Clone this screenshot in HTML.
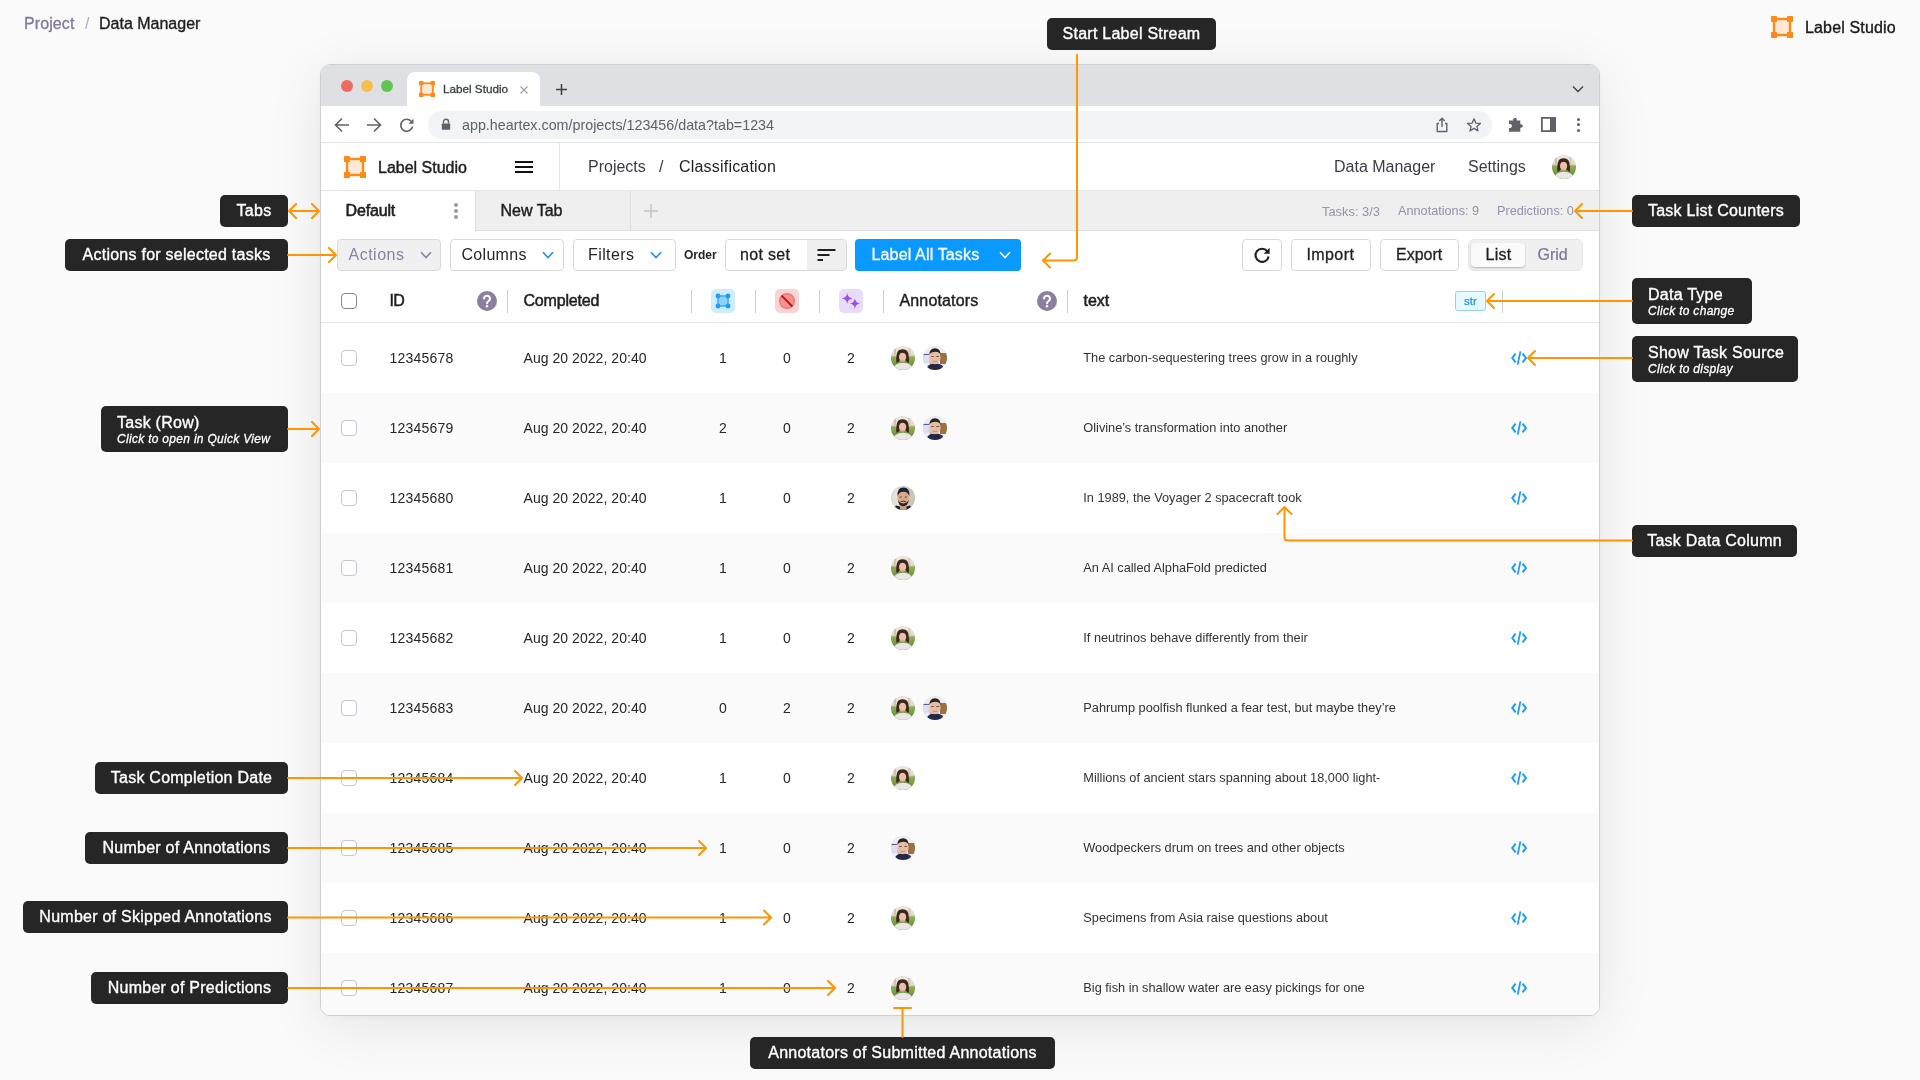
<!DOCTYPE html>
<html><head><meta charset="utf-8"><title>Label Studio Data Manager</title><style>
*{margin:0;padding:0;box-sizing:border-box}
html,body{width:1920px;height:1080px;overflow:hidden}
body{background:#fafafa;font-family:"Liberation Sans", sans-serif;position:relative;color:#262626;-webkit-font-smoothing:antialiased}
.lay{position:absolute;left:0;top:0;width:1920px;height:1080px;will-change:transform}
.a{position:absolute;white-space:nowrap}
.co{position:absolute;background:#262626;color:#fff;border-radius:5px;white-space:nowrap;font-size:16px;letter-spacing:0.25px;-webkit-text-stroke:0.36px #fff}
.co .t{position:absolute;left:16px;top:7px;line-height:18px}
.co .s{position:absolute;left:16px;font-size:12px;font-style:italic;letter-spacing:0.3px;-webkit-text-stroke:0.29px #fff}
.win{position:absolute;left:320px;top:64px;width:1280px;height:952px;border:1px solid #cfcfd2;border-radius:10px;overflow:hidden;background:#fff;box-shadow:0 10px 55px rgba(0,0,0,0.085),0 2px 8px rgba(0,0,0,0.03)}
.w{position:absolute}
.btn{position:absolute;top:175px;height:32px;border:1px solid #dcdcdc;border-radius:4px;background:#fff}
.row{position:absolute;left:0;width:1278px;height:70px}
.row .c{position:absolute;font-size:14px;color:#262626;top:27px;line-height:16px}
.cb{position:absolute;width:16px;height:16px;border:1px solid #c9c3d6;border-radius:4px;background:#fff}
.div{position:absolute;width:1px;height:23px;background:#cfcfcf}
</style></head>
<body><div class="lay">
<div class="a" style="left:24px;top:14.5px;font-size:16px;line-height:18px;color:#80789a;-webkit-text-stroke:0.29px #80789a;letter-spacing:0.1px">Project</div><div class="a" style="left:85px;top:14.5px;font-size:16px;line-height:18px;color:#b3adc0">/</div><div class="a" style="left:99px;top:14.5px;font-size:16px;line-height:18px;color:#1f1f1f;-webkit-text-stroke:0.36px #1f1f1f">Data Manager</div><svg style="position:absolute;left:1771px;top:16px" width="22" height="22" viewBox="0 0 22 22">
<rect x="3" y="3" width="16" height="16" fill="#fde8d6" stroke="#ff8a14" stroke-width="2.4"/>
<rect x="0" y="0" width="6" height="6" rx="0.6" fill="#ff8a14"/><rect x="16" y="0" width="6" height="6" rx="0.6" fill="#ff8a14"/>
<rect x="0" y="16" width="6" height="6" rx="0.6" fill="#ff8a14"/><rect x="16" y="16" width="6" height="6" rx="0.6" fill="#ff8a14"/>
</svg><div class="a" style="left:1805px;top:19px;font-size:16px;line-height:18px;color:#1a1a1a;letter-spacing:0.15px;-webkit-text-stroke:0.36px #1a1a1a">Label Studio</div>
<div class="win">
<div class="w" style="left:0;top:0;width:1278px;height:41px;background:#dfe0e4"></div><div class="w" style="left:20px;top:15px;width:12px;height:12px;border-radius:6px;background:#ed6a5e"></div><div class="w" style="left:40px;top:15px;width:12px;height:12px;border-radius:6px;background:#f5bf4f"></div><div class="w" style="left:60px;top:15px;width:12px;height:12px;border-radius:6px;background:#61c554"></div><div class="w" style="left:86px;top:7px;width:133px;height:34px;background:#fff;border-radius:8px 8px 0 0"></div><svg style="position:absolute;left:98px;top:16px" width="16" height="16" viewBox="0 0 22 22">
<rect x="3" y="3" width="16" height="16" fill="#fde8d6" stroke="#ff8a14" stroke-width="2.4"/>
<rect x="0" y="0" width="6" height="6" rx="0.6" fill="#ff8a14"/><rect x="16" y="0" width="6" height="6" rx="0.6" fill="#ff8a14"/>
<rect x="0" y="16" width="6" height="6" rx="0.6" fill="#ff8a14"/><rect x="16" y="16" width="6" height="6" rx="0.6" fill="#ff8a14"/>
</svg><div class="w a" style="left:122px;top:17px;font-size:11.7px;line-height:14px;color:#3c4043;-webkit-text-stroke:0.29px #3c4043">Label Studio</div><svg class="w" style="left:198px;top:20px" width="10" height="10"><path d="M1.5 1.5L8.5 8.5M8.5 1.5L1.5 8.5" stroke="#9aa0a6" stroke-width="1.2"/></svg><svg class="w" style="left:234px;top:18px" width="13" height="13"><path d="M6.5 1V12M1 6.5H12" stroke="#3c4043" stroke-width="1.5"/></svg><svg class="w" style="left:1251px;top:20px" width="12" height="8"><path d="M1 1.5L6 6.5L11 1.5" fill="none" stroke="#3c4043" stroke-width="1.4"/></svg><div class="w" style="left:0;top:41px;width:1278px;height:37px;background:#fff;border-bottom:1px solid #e3e3e3"></div><svg class="w" style="left:13px;top:52px" width="16" height="16"><path d="M15 8H2M8 1.5L1.5 8L8 14.5" fill="none" stroke="#5f6368" stroke-width="1.6"/></svg><svg class="w" style="left:45px;top:52px" width="16" height="16"><path d="M1 8H14M8 1.5L14.5 8L8 14.5" fill="none" stroke="#5f6368" stroke-width="1.6"/></svg><svg class="w" style="left:78px;top:52px" width="16" height="16"><path d="M12.2 4.2A6 6 0 1 0 13.6 9.5" fill="none" stroke="#5f6368" stroke-width="1.6"/><path d="M14.5 1.8V6.8H9.5Z" fill="#5f6368"/></svg><div class="w" style="left:107px;top:46px;width:1064px;height:28px;border-radius:14px;background:#f1f3f4"></div><svg class="w" style="left:120px;top:53px" width="10" height="12"><path d="M2.5 5.5V3.8A2.5 2.5 0 0 1 7.5 3.8V5.5" fill="none" stroke="#5f6368" stroke-width="1.4"/><rect x="0.8" y="5.5" width="8.4" height="6.3" rx="0.8" fill="#5f6368"/></svg><div class="w a" style="left:141px;top:52px;font-size:14.3px;line-height:17px;color:#5f6368">app.heartex.com/projects/123456/data?tab=1234</div><svg class="w" style="left:1114px;top:52px" width="14" height="16"><path d="M4 6.5H2.2V14.5H11.8V6.5H10" fill="none" stroke="#5f6368" stroke-width="1.4" stroke-linejoin="round"/><path d="M7 10V1.5M4.3 4L7 1.3L9.7 4" fill="none" stroke="#5f6368" stroke-width="1.4"/></svg><svg class="w" style="left:1145px;top:52px" width="16" height="16"><path d="M8 1.8L9.8 6.1L14.4 6.4L10.9 9.4L12 13.9L8 11.4L4 13.9L5.1 9.4L1.6 6.4L6.2 6.1Z" fill="none" stroke="#5f6368" stroke-width="1.3" stroke-linejoin="round"/></svg><svg class="w" style="left:1187px;top:52px" width="16" height="16"><path d="M6.2 1.2A1.6 1.6 0 0 1 8.8 2.6V3.6H12.3V7.2H13A1.8 1.8 0 0 1 13 10.8H12.3V14.8H1V10.9H2A1.9 1.9 0 0 0 2 7.1H1V3.6H5.1V2.6A1.6 1.6 0 0 1 6.2 1.2Z" fill="#5f6368"/></svg><svg class="w" style="left:1220px;top:52px" width="15" height="15"><rect x="0.9" y="0.9" width="13.2" height="13.2" fill="none" stroke="#5f6368" stroke-width="1.8"/><rect x="9" y="1" width="5" height="13" fill="#5f6368"/></svg><div class="w" style="left:1255.5px;top:52.5px;width:3.2px;height:3.2px;border-radius:2px;background:#5f6368"></div><div class="w" style="left:1255.5px;top:58.0px;width:3.2px;height:3.2px;border-radius:2px;background:#5f6368"></div><div class="w" style="left:1255.5px;top:63.5px;width:3.2px;height:3.2px;border-radius:2px;background:#5f6368"></div><div class="w" style="left:0;top:78px;width:1278px;height:48px;background:#fff;border-bottom:1px solid #e5e5e8"></div><svg style="position:absolute;left:23px;top:91px" width="22" height="22" viewBox="0 0 22 22">
<rect x="3" y="3" width="16" height="16" fill="#fde8d6" stroke="#ff8a14" stroke-width="2.4"/>
<rect x="0" y="0" width="6" height="6" rx="0.6" fill="#ff8a14"/><rect x="16" y="0" width="6" height="6" rx="0.6" fill="#ff8a14"/>
<rect x="0" y="16" width="6" height="6" rx="0.6" fill="#ff8a14"/><rect x="16" y="16" width="6" height="6" rx="0.6" fill="#ff8a14"/>
</svg><div class="w a" style="left:57px;top:94px;font-size:16px;line-height:18px;color:#1f1f1f;-webkit-text-stroke:0.43px #1f1f1f">Label Studio</div><div class="w" style="left:194px;top:96px;width:18px;height:2px;background:#111"></div><div class="w" style="left:194px;top:101px;width:18px;height:2px;background:#111"></div><div class="w" style="left:194px;top:106px;width:18px;height:2px;background:#111"></div><div class="w" style="left:238px;top:78px;width:1px;height:47px;background:#e5e5e8"></div><div class="w a" style="left:267px;top:93px;font-size:16px;line-height:18px;color:#3b3a4a">Projects</div><div class="w a" style="left:338px;top:93px;font-size:16px;line-height:18px;color:#3b3a4a">/</div><div class="w a" style="left:358px;top:93px;font-size:16px;line-height:18px;color:#1f1f1f;letter-spacing:0.2px">Classification</div><div class="w a" style="left:1013px;top:93px;font-size:16px;line-height:18px;color:#3b3a4a">Data Manager</div><div class="w a" style="left:1147px;top:93px;font-size:16px;line-height:18px;color:#3b3a4a">Settings</div><div class="w" style="left:0;top:126px;width:1278px;height:40px;background:#efefef;border-bottom:1px solid #dedde3"></div><div class="w" style="left:0;top:126px;width:154px;height:40px;background:#fff"></div><div class="w" style="left:154px;top:126px;width:156px;height:40px;border-left:1px solid #dedde3;border-right:1px solid #dedde3;border-bottom:1px solid #dedde3"></div><div class="w a" style="left:24.5px;top:137px;font-size:16px;line-height:18px;color:#1f1f1f;-webkit-text-stroke:0.58px #1f1f1f;letter-spacing:-0.15px">Default</div><div class="w" style="left:133px;top:138px;width:4px;height:4px;border-radius:2px;background:#9a9a9a"></div><div class="w" style="left:133px;top:144px;width:4px;height:4px;border-radius:2px;background:#9a9a9a"></div><div class="w" style="left:133px;top:150px;width:4px;height:4px;border-radius:2px;background:#9a9a9a"></div><div class="w a" style="left:179.5px;top:137px;font-size:16px;line-height:18px;color:#1f1f1f;-webkit-text-stroke:0.43px #1f1f1f">New Tab</div><svg class="w" style="left:323px;top:139px" width="14" height="14"><path d="M7 0V14M0 7H14" stroke="#c4c4c4" stroke-width="1.5"/></svg><div class="w a" style="left:1001px;top:139px;font-size:12.9px;line-height:15px;color:#9790aa">Tasks: 3/3</div><div class="w a" style="left:1077px;top:139px;font-size:12.7px;line-height:15px;color:#9790aa">Annotations: 9</div><div class="w a" style="left:1176px;top:139px;font-size:12.7px;line-height:15px;color:#9790aa">Predictions: 0</div><div class="w" style="left:16px;top:174px;width:104px;height:32px;background:#f0f0f0;border:1px solid #dadada;border-radius:4px"></div><div class="w a" style="left:27.5px;top:181px;font-size:16px;line-height:18px;color:#8b82a0;letter-spacing:0.5px">Actions</div><svg class="w" style="left:99px;top:186px" width="12" height="8"><path d="M1 1.2L6.0 6.5L11 1.2" fill="none" stroke="#8b82a0" stroke-width="1.6"/></svg><div class="w" style="left:128.5px;top:174px;width:114.5px;height:32px;background:#fff;border:1px solid #d9d9d9;border-radius:4px"></div><div class="w a" style="left:140.5px;top:181px;font-size:16px;line-height:18px;color:#262626;letter-spacing:0.3px">Columns</div><svg class="w" style="left:220.5px;top:186px" width="12" height="8"><path d="M1 1.2L6.0 6.5L11 1.2" fill="none" stroke="#1890ff" stroke-width="1.6"/></svg><div class="w" style="left:251.5px;top:174px;width:103.5px;height:32px;background:#fff;border:1px solid #d9d9d9;border-radius:4px"></div><div class="w a" style="left:267px;top:181px;font-size:16px;line-height:18px;color:#262626;letter-spacing:0.4px">Filters</div><svg class="w" style="left:328.5px;top:186px" width="12" height="8"><path d="M1 1.2L6.0 6.5L11 1.2" fill="none" stroke="#1890ff" stroke-width="1.6"/></svg><div class="w a" style="left:363px;top:183px;font-size:12px;line-height:14px;color:#262626;font-weight:bold">Order</div><div class="w" style="left:403.5px;top:174px;width:122.5px;height:32px;background:#fff;border:1px solid #d9d9d9;border-radius:4px"></div><div class="w" style="left:486px;top:175px;width:39px;height:30px;background:#efefef;border-radius:0 3px 3px 0"></div><div class="w a" style="left:419px;top:181px;font-size:16px;line-height:18px;color:#1f1f1f;letter-spacing:0.3px;-webkit-text-stroke:0.29px #1f1f1f">not set</div><svg class="w" style="left:496px;top:183px" width="20" height="14"><path d="M0.5 2H18.5M0.5 7H12.5M0.5 12H6" stroke="#1f1f1f" stroke-width="2"/></svg><div class="w" style="left:534px;top:174px;width:166px;height:32px;background:#0a99ff;border-radius:4px"></div><div class="w a" style="left:550.5px;top:181px;font-size:16px;line-height:18px;color:#fff;letter-spacing:0.15px;-webkit-text-stroke:0.29px #fff">Label All Tasks</div><svg class="w" style="left:677.5px;top:186px" width="12" height="8"><path d="M1 1.2L6.0 6.5L11 1.2" fill="none" stroke="#fff" stroke-width="1.6"/></svg><div class="w" style="left:921px;top:174px;width:40px;height:32px;background:#fff;border:1px solid #d9d9d9;border-radius:4px"></div><svg class="w" style="left:932px;top:181px" width="18" height="18"><path d="M14.3 5.2A6.6 6.6 0 1 0 15.6 10.5" fill="none" stroke="#1f1f1f" stroke-width="2.1"/><path d="M16.6 1.8V7.8H10.6Z" fill="#1f1f1f"/></svg><div class="w" style="left:969.5px;top:174px;width:80.5px;height:32px;background:#fff;border:1px solid #d9d9d9;border-radius:4px"></div><div class="w a" style="left:985.5px;top:181px;font-size:16px;line-height:18px;color:#1f1f1f;letter-spacing:0.4px;-webkit-text-stroke:0.29px #1f1f1f">Import</div><div class="w" style="left:1058.5px;top:174px;width:79.5px;height:32px;background:#fff;border:1px solid #d9d9d9;border-radius:4px"></div><div class="w a" style="left:1075px;top:181px;font-size:16px;line-height:18px;color:#1f1f1f;letter-spacing:0px;-webkit-text-stroke:0.29px #1f1f1f">Export</div><div class="w" style="left:1146.5px;top:174px;width:115.5px;height:32px;background:#f0f0f0;border:1px solid #e6e6e6;border-radius:6px"></div><div class="w" style="left:1150px;top:178px;width:54px;height:24px;background:#fafafa;border-radius:4px;box-shadow:0 1px 2px rgba(0,0,0,0.25)"></div><div class="w a" style="left:1164.5px;top:181px;font-size:16px;line-height:18px;color:#1f1f1f;letter-spacing:0.3px;-webkit-text-stroke:0.29px #1f1f1f">List</div><div class="w a" style="left:1216.5px;top:181px;font-size:16px;line-height:18px;color:#7f7599;-webkit-text-stroke:0.22px #7f7599">Grid</div><div class="w" style="left:0;top:257px;width:1278px;height:1px;background:#e6e6e6"></div><div class="cb" style="left:20px;top:228px;border-color:#8b82a0;border-width:1.3px"></div><div class="w a" style="left:68.5px;top:227px;font-size:16px;line-height:18px;color:#1f1f1f;letter-spacing:-0.6px;-webkit-text-stroke:0.51px #1f1f1f">ID</div><svg class="w" style="left:156px;top:226px" width="20" height="20"><circle cx="10" cy="10" r="10" fill="#8a7f9e"/><path d="M7.1 7.6A2.9 2.9 0 1 1 11.2 10.3C10.3 10.8 10 11.3 10 12.2" fill="none" stroke="#fff" stroke-width="2" stroke-linecap="round"/><circle cx="10" cy="15.3" r="1.25" fill="#fff"/></svg><div class="div" style="left:186px;top:224.5px"></div><div class="w a" style="left:202.5px;top:227px;font-size:16px;line-height:18px;color:#1f1f1f;letter-spacing:-0.2px;-webkit-text-stroke:0.51px #1f1f1f">Completed</div><div class="div" style="left:370px;top:224.5px"></div><svg class="w" style="left:390px;top:224px" width="24" height="24"><rect width="24" height="24" rx="5" fill="#d0ecff"/><rect x="7" y="7" width="10" height="10" fill="#8ed1ff" stroke="#4db3ff" stroke-width="1.8"/><circle cx="7" cy="7" r="2.45" fill="#1a9bff"/><circle cx="17" cy="7" r="2.45" fill="#1a9bff"/><circle cx="7" cy="17" r="2.45" fill="#1a9bff"/><circle cx="17" cy="17" r="2.45" fill="#1a9bff"/></svg><div class="div" style="left:434px;top:224.5px"></div><svg class="w" style="left:454px;top:224px" width="24" height="24"><rect width="24" height="24" rx="5" fill="#fad4d4"/><circle cx="12" cy="12" r="7.3" fill="#f09494" stroke="#ec7474" stroke-width="1.4"/><path d="M6.6 6.6L17.2 17.2" stroke="#d90a0a" stroke-width="2"/></svg><div class="div" style="left:498px;top:224.5px"></div><svg class="w" style="left:518px;top:224px" width="24" height="24"><rect width="24" height="24" rx="5" fill="#e8dcfa"/><path d="M8.2 4.1Q8.739999999999998 8.96 13.6 9.5Q8.739999999999998 10.04 8.2 14.9Q7.659999999999999 10.04 2.799999999999999 9.5Q7.659999999999999 8.96 8.2 4.1Z" fill="#9b4ff2"/><path d="M15.9 9.3Q16.43 14.07 21.2 14.6Q16.43 15.129999999999999 15.9 19.9Q15.370000000000001 15.129999999999999 10.600000000000001 14.6Q15.370000000000001 14.07 15.9 9.3Z" fill="#9b4ff2"/></svg><div class="div" style="left:562px;top:224.5px"></div><div class="w a" style="left:578.5px;top:227px;font-size:16px;line-height:18px;color:#1f1f1f;letter-spacing:0.15px;-webkit-text-stroke:0.43px #1f1f1f">Annotators</div><svg class="w" style="left:716px;top:226px" width="20" height="20"><circle cx="10" cy="10" r="10" fill="#8a7f9e"/><path d="M7.1 7.6A2.9 2.9 0 1 1 11.2 10.3C10.3 10.8 10 11.3 10 12.2" fill="none" stroke="#fff" stroke-width="2" stroke-linecap="round"/><circle cx="10" cy="15.3" r="1.25" fill="#fff"/></svg><div class="div" style="left:746px;top:224.5px"></div><div class="w a" style="left:762.5px;top:227px;font-size:16px;line-height:18px;color:#1f1f1f;letter-spacing:0px;-webkit-text-stroke:0.51px #1f1f1f">text</div><div class="w a" style="left:1134px;top:226px;width:31px;height:20px;background:#e6f9ff;border:1px solid #91cfff;border-radius:2.5px;font-size:11.5px;line-height:19px;color:#1890ff;text-align:center;-webkit-text-stroke:0.22px #1890ff">str</div><div class="div" style="left:1181px;top:224.5px"></div><div class="w" style="left:0;top:258px;width:1278px;height:70px;background:#fff"></div><div class="cb" style="left:20px;top:285px"></div><div class="w a" style="left:68.5px;top:284.5px;font-size:14px;line-height:16px;color:#262626;letter-spacing:0.2px">12345678</div><div class="w a" style="left:202.5px;top:284.5px;font-size:14px;line-height:16px;color:#262626;letter-spacing:0.05px">Aug 20 2022, 20:40</div><div class="w a" style="left:392px;width:20px;text-align:center;top:284.5px;font-size:14px;line-height:16px;color:#262626">1</div><div class="w a" style="left:456px;width:20px;text-align:center;top:284.5px;font-size:14px;line-height:16px;color:#262626">0</div><div class="w a" style="left:520px;width:20px;text-align:center;top:284.5px;font-size:14px;line-height:16px;color:#262626">2</div><svg class="w" style="left:570px;top:281px" width="24" height="24" viewBox="0 0 24 24"><defs><clipPath id="c903_358"><circle cx="12" cy="12" r="12"/></clipPath></defs><g clip-path="url(#c903_358)"><defs><linearGradient id="g903_358" x1="0" y1="0" x2="0" y2="1"><stop offset="0" stop-color="#efe9e2"/><stop offset="0.38" stop-color="#e2dcd2"/><stop offset="0.46" stop-color="#8fae55"/><stop offset="0.8" stop-color="#6f9440"/></linearGradient></defs><rect width="24" height="24" fill="url(#g903_358)"/><rect x="3" y="1" width="2" height="8" fill="#c4b4a4" opacity="0.7"/><rect x="17" y="2" width="2.5" height="7" fill="#d2c6b8" opacity="0.7"/><path d="M1.5 24Q3 17.2 12 16.8Q21 17.2 22.5 24Z" fill="#ebe7e6"/><path d="M5.3 16.6Q4.8 6.2 7.8 4.2Q11.6 2.1 15.3 4.2Q18.4 6.2 17.9 16.6Q15.6 17 15 14.6L8.3 14.6Q7.8 17 5.3 16.6Z" fill="#3d271b"/><ellipse cx="11.6" cy="10.9" rx="3.6" ry="4.6" fill="#e6c0a8"/><path d="M7.9 8.2Q9.3 5.2 11.7 5.3Q14.6 5.3 15.4 8.4Q13.6 6.8 11.7 6.8Q9.4 6.8 7.9 8.2Z" fill="#3d271b"/><path d="M10.2 14.2Q11.6 15 13 14.2" fill="none" stroke="#c89a86" stroke-width="0.5"/></g><circle cx="12" cy="12" r="11.7" fill="none" stroke="rgba(0,0,0,0.06)" stroke-width="0.6"/></svg><svg class="w" style="left:602px;top:281px" width="24" height="24" viewBox="0 0 24 24"><defs><clipPath id="c935_358"><circle cx="12" cy="12" r="12"/></clipPath></defs><g clip-path="url(#c935_358)"><rect width="24" height="24" fill="#eceef4"/><rect x="0" y="7" width="7" height="10" fill="#dfe0ef"/><rect x="0" y="8" width="6" height="1" fill="#5a5a90"/><rect x="17" y="7" width="7" height="11" fill="#9c7040"/><path d="M3 24Q5 16.5 12 17.5Q19 16.5 22 24Z" fill="#232843"/><path d="M16 18L20 20L18 24Z" fill="#3b3050"/><ellipse cx="12" cy="11.6" rx="5.6" ry="6.6" fill="#e5bca4"/><path d="M6.3 9Q6.3 2.2 12 2.2Q17.6 2.2 17.5 9Q16.8 6 12.5 5.7Q8 5.7 6.3 9Z" fill="#27221f"/><path d="M6.4 12Q6.8 16.5 9 17.6L7 18Q6.2 15 6.4 12Z" fill="#c8987c"/><rect x="8.3" y="10" width="2.4" height="0.9" fill="#5a4036"/><rect x="13.4" y="10" width="2.4" height="0.9" fill="#5a4036"/><path d="M10 15.2Q12 16.2 14.2 15.2" fill="none" stroke="#b27a68" stroke-width="0.7"/></g><circle cx="12" cy="12" r="11.7" fill="none" stroke="rgba(0,0,0,0.06)" stroke-width="0.6"/></svg><div class="w a" style="left:762.3px;top:285px;font-size:12.75px;line-height:15px;color:#333">The carbon-sequestering trees grow in a roughly</div><svg class="w" style="left:1190px;top:286px" width="16" height="14"><path d="M4.6 2.6L1.3 7L4.6 11.4M11.6 2.6L14.9 7L11.6 11.4" fill="none" stroke="#1a9bff" stroke-width="2"/><path d="M9.4 0.4L6.7 13.6" stroke="#1a9bff" stroke-width="1.8"/></svg><div class="w" style="left:0;top:328px;width:1278px;height:70px;background:#fafafa"></div><div class="cb" style="left:20px;top:355px"></div><div class="w a" style="left:68.5px;top:354.5px;font-size:14px;line-height:16px;color:#262626;letter-spacing:0.2px">12345679</div><div class="w a" style="left:202.5px;top:354.5px;font-size:14px;line-height:16px;color:#262626;letter-spacing:0.05px">Aug 20 2022, 20:40</div><div class="w a" style="left:392px;width:20px;text-align:center;top:354.5px;font-size:14px;line-height:16px;color:#262626">2</div><div class="w a" style="left:456px;width:20px;text-align:center;top:354.5px;font-size:14px;line-height:16px;color:#262626">0</div><div class="w a" style="left:520px;width:20px;text-align:center;top:354.5px;font-size:14px;line-height:16px;color:#262626">2</div><svg class="w" style="left:570px;top:351px" width="24" height="24" viewBox="0 0 24 24"><defs><clipPath id="c903_428"><circle cx="12" cy="12" r="12"/></clipPath></defs><g clip-path="url(#c903_428)"><defs><linearGradient id="g903_428" x1="0" y1="0" x2="0" y2="1"><stop offset="0" stop-color="#efe9e2"/><stop offset="0.38" stop-color="#e2dcd2"/><stop offset="0.46" stop-color="#8fae55"/><stop offset="0.8" stop-color="#6f9440"/></linearGradient></defs><rect width="24" height="24" fill="url(#g903_428)"/><rect x="3" y="1" width="2" height="8" fill="#c4b4a4" opacity="0.7"/><rect x="17" y="2" width="2.5" height="7" fill="#d2c6b8" opacity="0.7"/><path d="M1.5 24Q3 17.2 12 16.8Q21 17.2 22.5 24Z" fill="#ebe7e6"/><path d="M5.3 16.6Q4.8 6.2 7.8 4.2Q11.6 2.1 15.3 4.2Q18.4 6.2 17.9 16.6Q15.6 17 15 14.6L8.3 14.6Q7.8 17 5.3 16.6Z" fill="#3d271b"/><ellipse cx="11.6" cy="10.9" rx="3.6" ry="4.6" fill="#e6c0a8"/><path d="M7.9 8.2Q9.3 5.2 11.7 5.3Q14.6 5.3 15.4 8.4Q13.6 6.8 11.7 6.8Q9.4 6.8 7.9 8.2Z" fill="#3d271b"/><path d="M10.2 14.2Q11.6 15 13 14.2" fill="none" stroke="#c89a86" stroke-width="0.5"/></g><circle cx="12" cy="12" r="11.7" fill="none" stroke="rgba(0,0,0,0.06)" stroke-width="0.6"/></svg><svg class="w" style="left:602px;top:351px" width="24" height="24" viewBox="0 0 24 24"><defs><clipPath id="c935_428"><circle cx="12" cy="12" r="12"/></clipPath></defs><g clip-path="url(#c935_428)"><rect width="24" height="24" fill="#eceef4"/><rect x="0" y="7" width="7" height="10" fill="#dfe0ef"/><rect x="0" y="8" width="6" height="1" fill="#5a5a90"/><rect x="17" y="7" width="7" height="11" fill="#9c7040"/><path d="M3 24Q5 16.5 12 17.5Q19 16.5 22 24Z" fill="#232843"/><path d="M16 18L20 20L18 24Z" fill="#3b3050"/><ellipse cx="12" cy="11.6" rx="5.6" ry="6.6" fill="#e5bca4"/><path d="M6.3 9Q6.3 2.2 12 2.2Q17.6 2.2 17.5 9Q16.8 6 12.5 5.7Q8 5.7 6.3 9Z" fill="#27221f"/><path d="M6.4 12Q6.8 16.5 9 17.6L7 18Q6.2 15 6.4 12Z" fill="#c8987c"/><rect x="8.3" y="10" width="2.4" height="0.9" fill="#5a4036"/><rect x="13.4" y="10" width="2.4" height="0.9" fill="#5a4036"/><path d="M10 15.2Q12 16.2 14.2 15.2" fill="none" stroke="#b27a68" stroke-width="0.7"/></g><circle cx="12" cy="12" r="11.7" fill="none" stroke="rgba(0,0,0,0.06)" stroke-width="0.6"/></svg><div class="w a" style="left:762.3px;top:355px;font-size:12.75px;line-height:15px;color:#333">Olivine’s transformation into another</div><svg class="w" style="left:1190px;top:356px" width="16" height="14"><path d="M4.6 2.6L1.3 7L4.6 11.4M11.6 2.6L14.9 7L11.6 11.4" fill="none" stroke="#1a9bff" stroke-width="2"/><path d="M9.4 0.4L6.7 13.6" stroke="#1a9bff" stroke-width="1.8"/></svg><div class="w" style="left:0;top:398px;width:1278px;height:70px;background:#fff"></div><div class="cb" style="left:20px;top:425px"></div><div class="w a" style="left:68.5px;top:424.5px;font-size:14px;line-height:16px;color:#262626;letter-spacing:0.2px">12345680</div><div class="w a" style="left:202.5px;top:424.5px;font-size:14px;line-height:16px;color:#262626;letter-spacing:0.05px">Aug 20 2022, 20:40</div><div class="w a" style="left:392px;width:20px;text-align:center;top:424.5px;font-size:14px;line-height:16px;color:#262626">1</div><div class="w a" style="left:456px;width:20px;text-align:center;top:424.5px;font-size:14px;line-height:16px;color:#262626">0</div><div class="w a" style="left:520px;width:20px;text-align:center;top:424.5px;font-size:14px;line-height:16px;color:#262626">2</div><svg class="w" style="left:570px;top:421px" width="24" height="24" viewBox="0 0 24 24"><defs><clipPath id="c903_498"><circle cx="12" cy="12" r="12"/></clipPath></defs><g clip-path="url(#c903_498)"><rect width="24" height="24" fill="#d9d3c8"/><rect x="0" y="0" width="7" height="24" fill="#e4e0da"/><rect x="17" y="0" width="7" height="24" fill="#cdc6b6"/><path d="M2 24L5 19.5L9 20.5L12 24Z" fill="#1e2030"/><path d="M22 24L19 19.5L15 20.5L12 24Z" fill="#1e2030"/><rect x="9" y="17" width="6.5" height="7" fill="#cf9f80"/><ellipse cx="12.3" cy="12" rx="5.8" ry="7" fill="#d8a98b"/><path d="M6.6 10.5Q5.8 1.6 12.5 1.6Q19.2 1.6 18.2 10.5Q17.4 6 12.5 5.8Q7.6 6 6.6 10.5Z" fill="#1f2232"/><path d="M6.8 13.5Q7.5 20.2 12.3 20.2Q17.1 20.2 17.8 13.5Q16.5 17.2 12.3 17.4Q8.1 17.2 6.8 13.5Z" fill="#2a2630"/><path d="M9.8 15.6Q12.3 14.8 14.8 15.6" fill="none" stroke="#3a2a28" stroke-width="0.9"/><rect x="8.6" y="10.6" width="2" height="0.9" fill="#4a3028"/><rect x="13.8" y="10.6" width="2" height="0.9" fill="#4a3028"/></g><circle cx="12" cy="12" r="11.7" fill="none" stroke="rgba(0,0,0,0.06)" stroke-width="0.6"/></svg><div class="w a" style="left:762.3px;top:425px;font-size:12.75px;line-height:15px;color:#333">In 1989, the Voyager 2 spacecraft took</div><svg class="w" style="left:1190px;top:426px" width="16" height="14"><path d="M4.6 2.6L1.3 7L4.6 11.4M11.6 2.6L14.9 7L11.6 11.4" fill="none" stroke="#1a9bff" stroke-width="2"/><path d="M9.4 0.4L6.7 13.6" stroke="#1a9bff" stroke-width="1.8"/></svg><div class="w" style="left:0;top:468px;width:1278px;height:70px;background:#fafafa"></div><div class="cb" style="left:20px;top:495px"></div><div class="w a" style="left:68.5px;top:494.5px;font-size:14px;line-height:16px;color:#262626;letter-spacing:0.2px">12345681</div><div class="w a" style="left:202.5px;top:494.5px;font-size:14px;line-height:16px;color:#262626;letter-spacing:0.05px">Aug 20 2022, 20:40</div><div class="w a" style="left:392px;width:20px;text-align:center;top:494.5px;font-size:14px;line-height:16px;color:#262626">1</div><div class="w a" style="left:456px;width:20px;text-align:center;top:494.5px;font-size:14px;line-height:16px;color:#262626">0</div><div class="w a" style="left:520px;width:20px;text-align:center;top:494.5px;font-size:14px;line-height:16px;color:#262626">2</div><svg class="w" style="left:570px;top:491px" width="24" height="24" viewBox="0 0 24 24"><defs><clipPath id="c903_568"><circle cx="12" cy="12" r="12"/></clipPath></defs><g clip-path="url(#c903_568)"><defs><linearGradient id="g903_568" x1="0" y1="0" x2="0" y2="1"><stop offset="0" stop-color="#efe9e2"/><stop offset="0.38" stop-color="#e2dcd2"/><stop offset="0.46" stop-color="#8fae55"/><stop offset="0.8" stop-color="#6f9440"/></linearGradient></defs><rect width="24" height="24" fill="url(#g903_568)"/><rect x="3" y="1" width="2" height="8" fill="#c4b4a4" opacity="0.7"/><rect x="17" y="2" width="2.5" height="7" fill="#d2c6b8" opacity="0.7"/><path d="M1.5 24Q3 17.2 12 16.8Q21 17.2 22.5 24Z" fill="#ebe7e6"/><path d="M5.3 16.6Q4.8 6.2 7.8 4.2Q11.6 2.1 15.3 4.2Q18.4 6.2 17.9 16.6Q15.6 17 15 14.6L8.3 14.6Q7.8 17 5.3 16.6Z" fill="#3d271b"/><ellipse cx="11.6" cy="10.9" rx="3.6" ry="4.6" fill="#e6c0a8"/><path d="M7.9 8.2Q9.3 5.2 11.7 5.3Q14.6 5.3 15.4 8.4Q13.6 6.8 11.7 6.8Q9.4 6.8 7.9 8.2Z" fill="#3d271b"/><path d="M10.2 14.2Q11.6 15 13 14.2" fill="none" stroke="#c89a86" stroke-width="0.5"/></g><circle cx="12" cy="12" r="11.7" fill="none" stroke="rgba(0,0,0,0.06)" stroke-width="0.6"/></svg><div class="w a" style="left:762.3px;top:495px;font-size:12.75px;line-height:15px;color:#333">An AI called AlphaFold predicted</div><svg class="w" style="left:1190px;top:496px" width="16" height="14"><path d="M4.6 2.6L1.3 7L4.6 11.4M11.6 2.6L14.9 7L11.6 11.4" fill="none" stroke="#1a9bff" stroke-width="2"/><path d="M9.4 0.4L6.7 13.6" stroke="#1a9bff" stroke-width="1.8"/></svg><div class="w" style="left:0;top:538px;width:1278px;height:70px;background:#fff"></div><div class="cb" style="left:20px;top:565px"></div><div class="w a" style="left:68.5px;top:564.5px;font-size:14px;line-height:16px;color:#262626;letter-spacing:0.2px">12345682</div><div class="w a" style="left:202.5px;top:564.5px;font-size:14px;line-height:16px;color:#262626;letter-spacing:0.05px">Aug 20 2022, 20:40</div><div class="w a" style="left:392px;width:20px;text-align:center;top:564.5px;font-size:14px;line-height:16px;color:#262626">1</div><div class="w a" style="left:456px;width:20px;text-align:center;top:564.5px;font-size:14px;line-height:16px;color:#262626">0</div><div class="w a" style="left:520px;width:20px;text-align:center;top:564.5px;font-size:14px;line-height:16px;color:#262626">2</div><svg class="w" style="left:570px;top:561px" width="24" height="24" viewBox="0 0 24 24"><defs><clipPath id="c903_638"><circle cx="12" cy="12" r="12"/></clipPath></defs><g clip-path="url(#c903_638)"><defs><linearGradient id="g903_638" x1="0" y1="0" x2="0" y2="1"><stop offset="0" stop-color="#efe9e2"/><stop offset="0.38" stop-color="#e2dcd2"/><stop offset="0.46" stop-color="#8fae55"/><stop offset="0.8" stop-color="#6f9440"/></linearGradient></defs><rect width="24" height="24" fill="url(#g903_638)"/><rect x="3" y="1" width="2" height="8" fill="#c4b4a4" opacity="0.7"/><rect x="17" y="2" width="2.5" height="7" fill="#d2c6b8" opacity="0.7"/><path d="M1.5 24Q3 17.2 12 16.8Q21 17.2 22.5 24Z" fill="#ebe7e6"/><path d="M5.3 16.6Q4.8 6.2 7.8 4.2Q11.6 2.1 15.3 4.2Q18.4 6.2 17.9 16.6Q15.6 17 15 14.6L8.3 14.6Q7.8 17 5.3 16.6Z" fill="#3d271b"/><ellipse cx="11.6" cy="10.9" rx="3.6" ry="4.6" fill="#e6c0a8"/><path d="M7.9 8.2Q9.3 5.2 11.7 5.3Q14.6 5.3 15.4 8.4Q13.6 6.8 11.7 6.8Q9.4 6.8 7.9 8.2Z" fill="#3d271b"/><path d="M10.2 14.2Q11.6 15 13 14.2" fill="none" stroke="#c89a86" stroke-width="0.5"/></g><circle cx="12" cy="12" r="11.7" fill="none" stroke="rgba(0,0,0,0.06)" stroke-width="0.6"/></svg><div class="w a" style="left:762.3px;top:565px;font-size:12.75px;line-height:15px;color:#333">If neutrinos behave differently from their</div><svg class="w" style="left:1190px;top:566px" width="16" height="14"><path d="M4.6 2.6L1.3 7L4.6 11.4M11.6 2.6L14.9 7L11.6 11.4" fill="none" stroke="#1a9bff" stroke-width="2"/><path d="M9.4 0.4L6.7 13.6" stroke="#1a9bff" stroke-width="1.8"/></svg><div class="w" style="left:0;top:608px;width:1278px;height:70px;background:#fafafa"></div><div class="cb" style="left:20px;top:635px"></div><div class="w a" style="left:68.5px;top:634.5px;font-size:14px;line-height:16px;color:#262626;letter-spacing:0.2px">12345683</div><div class="w a" style="left:202.5px;top:634.5px;font-size:14px;line-height:16px;color:#262626;letter-spacing:0.05px">Aug 20 2022, 20:40</div><div class="w a" style="left:392px;width:20px;text-align:center;top:634.5px;font-size:14px;line-height:16px;color:#262626">0</div><div class="w a" style="left:456px;width:20px;text-align:center;top:634.5px;font-size:14px;line-height:16px;color:#262626">2</div><div class="w a" style="left:520px;width:20px;text-align:center;top:634.5px;font-size:14px;line-height:16px;color:#262626">2</div><svg class="w" style="left:570px;top:631px" width="24" height="24" viewBox="0 0 24 24"><defs><clipPath id="c903_708"><circle cx="12" cy="12" r="12"/></clipPath></defs><g clip-path="url(#c903_708)"><defs><linearGradient id="g903_708" x1="0" y1="0" x2="0" y2="1"><stop offset="0" stop-color="#efe9e2"/><stop offset="0.38" stop-color="#e2dcd2"/><stop offset="0.46" stop-color="#8fae55"/><stop offset="0.8" stop-color="#6f9440"/></linearGradient></defs><rect width="24" height="24" fill="url(#g903_708)"/><rect x="3" y="1" width="2" height="8" fill="#c4b4a4" opacity="0.7"/><rect x="17" y="2" width="2.5" height="7" fill="#d2c6b8" opacity="0.7"/><path d="M1.5 24Q3 17.2 12 16.8Q21 17.2 22.5 24Z" fill="#ebe7e6"/><path d="M5.3 16.6Q4.8 6.2 7.8 4.2Q11.6 2.1 15.3 4.2Q18.4 6.2 17.9 16.6Q15.6 17 15 14.6L8.3 14.6Q7.8 17 5.3 16.6Z" fill="#3d271b"/><ellipse cx="11.6" cy="10.9" rx="3.6" ry="4.6" fill="#e6c0a8"/><path d="M7.9 8.2Q9.3 5.2 11.7 5.3Q14.6 5.3 15.4 8.4Q13.6 6.8 11.7 6.8Q9.4 6.8 7.9 8.2Z" fill="#3d271b"/><path d="M10.2 14.2Q11.6 15 13 14.2" fill="none" stroke="#c89a86" stroke-width="0.5"/></g><circle cx="12" cy="12" r="11.7" fill="none" stroke="rgba(0,0,0,0.06)" stroke-width="0.6"/></svg><svg class="w" style="left:602px;top:631px" width="24" height="24" viewBox="0 0 24 24"><defs><clipPath id="c935_708"><circle cx="12" cy="12" r="12"/></clipPath></defs><g clip-path="url(#c935_708)"><rect width="24" height="24" fill="#eceef4"/><rect x="0" y="7" width="7" height="10" fill="#dfe0ef"/><rect x="0" y="8" width="6" height="1" fill="#5a5a90"/><rect x="17" y="7" width="7" height="11" fill="#9c7040"/><path d="M3 24Q5 16.5 12 17.5Q19 16.5 22 24Z" fill="#232843"/><path d="M16 18L20 20L18 24Z" fill="#3b3050"/><ellipse cx="12" cy="11.6" rx="5.6" ry="6.6" fill="#e5bca4"/><path d="M6.3 9Q6.3 2.2 12 2.2Q17.6 2.2 17.5 9Q16.8 6 12.5 5.7Q8 5.7 6.3 9Z" fill="#27221f"/><path d="M6.4 12Q6.8 16.5 9 17.6L7 18Q6.2 15 6.4 12Z" fill="#c8987c"/><rect x="8.3" y="10" width="2.4" height="0.9" fill="#5a4036"/><rect x="13.4" y="10" width="2.4" height="0.9" fill="#5a4036"/><path d="M10 15.2Q12 16.2 14.2 15.2" fill="none" stroke="#b27a68" stroke-width="0.7"/></g><circle cx="12" cy="12" r="11.7" fill="none" stroke="rgba(0,0,0,0.06)" stroke-width="0.6"/></svg><div class="w a" style="left:762.3px;top:635px;font-size:12.75px;line-height:15px;color:#333">Pahrump poolfish flunked a fear test, but maybe they’re</div><svg class="w" style="left:1190px;top:636px" width="16" height="14"><path d="M4.6 2.6L1.3 7L4.6 11.4M11.6 2.6L14.9 7L11.6 11.4" fill="none" stroke="#1a9bff" stroke-width="2"/><path d="M9.4 0.4L6.7 13.6" stroke="#1a9bff" stroke-width="1.8"/></svg><div class="w" style="left:0;top:678px;width:1278px;height:70px;background:#fff"></div><div class="cb" style="left:20px;top:705px"></div><div class="w a" style="left:68.5px;top:704.5px;font-size:14px;line-height:16px;color:#262626;letter-spacing:0.2px">12345684</div><div class="w a" style="left:202.5px;top:704.5px;font-size:14px;line-height:16px;color:#262626;letter-spacing:0.05px">Aug 20 2022, 20:40</div><div class="w a" style="left:392px;width:20px;text-align:center;top:704.5px;font-size:14px;line-height:16px;color:#262626">1</div><div class="w a" style="left:456px;width:20px;text-align:center;top:704.5px;font-size:14px;line-height:16px;color:#262626">0</div><div class="w a" style="left:520px;width:20px;text-align:center;top:704.5px;font-size:14px;line-height:16px;color:#262626">2</div><svg class="w" style="left:570px;top:701px" width="24" height="24" viewBox="0 0 24 24"><defs><clipPath id="c903_778"><circle cx="12" cy="12" r="12"/></clipPath></defs><g clip-path="url(#c903_778)"><defs><linearGradient id="g903_778" x1="0" y1="0" x2="0" y2="1"><stop offset="0" stop-color="#efe9e2"/><stop offset="0.38" stop-color="#e2dcd2"/><stop offset="0.46" stop-color="#8fae55"/><stop offset="0.8" stop-color="#6f9440"/></linearGradient></defs><rect width="24" height="24" fill="url(#g903_778)"/><rect x="3" y="1" width="2" height="8" fill="#c4b4a4" opacity="0.7"/><rect x="17" y="2" width="2.5" height="7" fill="#d2c6b8" opacity="0.7"/><path d="M1.5 24Q3 17.2 12 16.8Q21 17.2 22.5 24Z" fill="#ebe7e6"/><path d="M5.3 16.6Q4.8 6.2 7.8 4.2Q11.6 2.1 15.3 4.2Q18.4 6.2 17.9 16.6Q15.6 17 15 14.6L8.3 14.6Q7.8 17 5.3 16.6Z" fill="#3d271b"/><ellipse cx="11.6" cy="10.9" rx="3.6" ry="4.6" fill="#e6c0a8"/><path d="M7.9 8.2Q9.3 5.2 11.7 5.3Q14.6 5.3 15.4 8.4Q13.6 6.8 11.7 6.8Q9.4 6.8 7.9 8.2Z" fill="#3d271b"/><path d="M10.2 14.2Q11.6 15 13 14.2" fill="none" stroke="#c89a86" stroke-width="0.5"/></g><circle cx="12" cy="12" r="11.7" fill="none" stroke="rgba(0,0,0,0.06)" stroke-width="0.6"/></svg><div class="w a" style="left:762.3px;top:705px;font-size:12.75px;line-height:15px;color:#333">Millions of ancient stars spanning about 18,000 light-</div><svg class="w" style="left:1190px;top:706px" width="16" height="14"><path d="M4.6 2.6L1.3 7L4.6 11.4M11.6 2.6L14.9 7L11.6 11.4" fill="none" stroke="#1a9bff" stroke-width="2"/><path d="M9.4 0.4L6.7 13.6" stroke="#1a9bff" stroke-width="1.8"/></svg><div class="w" style="left:0;top:748px;width:1278px;height:70px;background:#fafafa"></div><div class="cb" style="left:20px;top:775px"></div><div class="w a" style="left:68.5px;top:774.5px;font-size:14px;line-height:16px;color:#262626;letter-spacing:0.2px">12345685</div><div class="w a" style="left:202.5px;top:774.5px;font-size:14px;line-height:16px;color:#262626;letter-spacing:0.05px">Aug 20 2022, 20:40</div><div class="w a" style="left:392px;width:20px;text-align:center;top:774.5px;font-size:14px;line-height:16px;color:#262626">1</div><div class="w a" style="left:456px;width:20px;text-align:center;top:774.5px;font-size:14px;line-height:16px;color:#262626">0</div><div class="w a" style="left:520px;width:20px;text-align:center;top:774.5px;font-size:14px;line-height:16px;color:#262626">2</div><svg class="w" style="left:570px;top:771px" width="24" height="24" viewBox="0 0 24 24"><defs><clipPath id="c903_848"><circle cx="12" cy="12" r="12"/></clipPath></defs><g clip-path="url(#c903_848)"><rect width="24" height="24" fill="#eceef4"/><rect x="0" y="7" width="7" height="10" fill="#dfe0ef"/><rect x="0" y="8" width="6" height="1" fill="#5a5a90"/><rect x="17" y="7" width="7" height="11" fill="#9c7040"/><path d="M3 24Q5 16.5 12 17.5Q19 16.5 22 24Z" fill="#232843"/><path d="M16 18L20 20L18 24Z" fill="#3b3050"/><ellipse cx="12" cy="11.6" rx="5.6" ry="6.6" fill="#e5bca4"/><path d="M6.3 9Q6.3 2.2 12 2.2Q17.6 2.2 17.5 9Q16.8 6 12.5 5.7Q8 5.7 6.3 9Z" fill="#27221f"/><path d="M6.4 12Q6.8 16.5 9 17.6L7 18Q6.2 15 6.4 12Z" fill="#c8987c"/><rect x="8.3" y="10" width="2.4" height="0.9" fill="#5a4036"/><rect x="13.4" y="10" width="2.4" height="0.9" fill="#5a4036"/><path d="M10 15.2Q12 16.2 14.2 15.2" fill="none" stroke="#b27a68" stroke-width="0.7"/></g><circle cx="12" cy="12" r="11.7" fill="none" stroke="rgba(0,0,0,0.06)" stroke-width="0.6"/></svg><div class="w a" style="left:762.3px;top:775px;font-size:12.75px;line-height:15px;color:#333">Woodpeckers drum on trees and other objects</div><svg class="w" style="left:1190px;top:776px" width="16" height="14"><path d="M4.6 2.6L1.3 7L4.6 11.4M11.6 2.6L14.9 7L11.6 11.4" fill="none" stroke="#1a9bff" stroke-width="2"/><path d="M9.4 0.4L6.7 13.6" stroke="#1a9bff" stroke-width="1.8"/></svg><div class="w" style="left:0;top:818px;width:1278px;height:70px;background:#fff"></div><div class="cb" style="left:20px;top:845px"></div><div class="w a" style="left:68.5px;top:844.5px;font-size:14px;line-height:16px;color:#262626;letter-spacing:0.2px">12345686</div><div class="w a" style="left:202.5px;top:844.5px;font-size:14px;line-height:16px;color:#262626;letter-spacing:0.05px">Aug 20 2022, 20:40</div><div class="w a" style="left:392px;width:20px;text-align:center;top:844.5px;font-size:14px;line-height:16px;color:#262626">1</div><div class="w a" style="left:456px;width:20px;text-align:center;top:844.5px;font-size:14px;line-height:16px;color:#262626">0</div><div class="w a" style="left:520px;width:20px;text-align:center;top:844.5px;font-size:14px;line-height:16px;color:#262626">2</div><svg class="w" style="left:570px;top:841px" width="24" height="24" viewBox="0 0 24 24"><defs><clipPath id="c903_918"><circle cx="12" cy="12" r="12"/></clipPath></defs><g clip-path="url(#c903_918)"><defs><linearGradient id="g903_918" x1="0" y1="0" x2="0" y2="1"><stop offset="0" stop-color="#efe9e2"/><stop offset="0.38" stop-color="#e2dcd2"/><stop offset="0.46" stop-color="#8fae55"/><stop offset="0.8" stop-color="#6f9440"/></linearGradient></defs><rect width="24" height="24" fill="url(#g903_918)"/><rect x="3" y="1" width="2" height="8" fill="#c4b4a4" opacity="0.7"/><rect x="17" y="2" width="2.5" height="7" fill="#d2c6b8" opacity="0.7"/><path d="M1.5 24Q3 17.2 12 16.8Q21 17.2 22.5 24Z" fill="#ebe7e6"/><path d="M5.3 16.6Q4.8 6.2 7.8 4.2Q11.6 2.1 15.3 4.2Q18.4 6.2 17.9 16.6Q15.6 17 15 14.6L8.3 14.6Q7.8 17 5.3 16.6Z" fill="#3d271b"/><ellipse cx="11.6" cy="10.9" rx="3.6" ry="4.6" fill="#e6c0a8"/><path d="M7.9 8.2Q9.3 5.2 11.7 5.3Q14.6 5.3 15.4 8.4Q13.6 6.8 11.7 6.8Q9.4 6.8 7.9 8.2Z" fill="#3d271b"/><path d="M10.2 14.2Q11.6 15 13 14.2" fill="none" stroke="#c89a86" stroke-width="0.5"/></g><circle cx="12" cy="12" r="11.7" fill="none" stroke="rgba(0,0,0,0.06)" stroke-width="0.6"/></svg><div class="w a" style="left:762.3px;top:845px;font-size:12.75px;line-height:15px;color:#333">Specimens from Asia raise questions about</div><svg class="w" style="left:1190px;top:846px" width="16" height="14"><path d="M4.6 2.6L1.3 7L4.6 11.4M11.6 2.6L14.9 7L11.6 11.4" fill="none" stroke="#1a9bff" stroke-width="2"/><path d="M9.4 0.4L6.7 13.6" stroke="#1a9bff" stroke-width="1.8"/></svg><div class="w" style="left:0;top:888px;width:1278px;height:70px;background:#fafafa"></div><div class="cb" style="left:20px;top:915px"></div><div class="w a" style="left:68.5px;top:914.5px;font-size:14px;line-height:16px;color:#262626;letter-spacing:0.2px">12345687</div><div class="w a" style="left:202.5px;top:914.5px;font-size:14px;line-height:16px;color:#262626;letter-spacing:0.05px">Aug 20 2022, 20:40</div><div class="w a" style="left:392px;width:20px;text-align:center;top:914.5px;font-size:14px;line-height:16px;color:#262626">1</div><div class="w a" style="left:456px;width:20px;text-align:center;top:914.5px;font-size:14px;line-height:16px;color:#262626">0</div><div class="w a" style="left:520px;width:20px;text-align:center;top:914.5px;font-size:14px;line-height:16px;color:#262626">2</div><svg class="w" style="left:570px;top:911px" width="24" height="24" viewBox="0 0 24 24"><defs><clipPath id="c903_988"><circle cx="12" cy="12" r="12"/></clipPath></defs><g clip-path="url(#c903_988)"><defs><linearGradient id="g903_988" x1="0" y1="0" x2="0" y2="1"><stop offset="0" stop-color="#efe9e2"/><stop offset="0.38" stop-color="#e2dcd2"/><stop offset="0.46" stop-color="#8fae55"/><stop offset="0.8" stop-color="#6f9440"/></linearGradient></defs><rect width="24" height="24" fill="url(#g903_988)"/><rect x="3" y="1" width="2" height="8" fill="#c4b4a4" opacity="0.7"/><rect x="17" y="2" width="2.5" height="7" fill="#d2c6b8" opacity="0.7"/><path d="M1.5 24Q3 17.2 12 16.8Q21 17.2 22.5 24Z" fill="#ebe7e6"/><path d="M5.3 16.6Q4.8 6.2 7.8 4.2Q11.6 2.1 15.3 4.2Q18.4 6.2 17.9 16.6Q15.6 17 15 14.6L8.3 14.6Q7.8 17 5.3 16.6Z" fill="#3d271b"/><ellipse cx="11.6" cy="10.9" rx="3.6" ry="4.6" fill="#e6c0a8"/><path d="M7.9 8.2Q9.3 5.2 11.7 5.3Q14.6 5.3 15.4 8.4Q13.6 6.8 11.7 6.8Q9.4 6.8 7.9 8.2Z" fill="#3d271b"/><path d="M10.2 14.2Q11.6 15 13 14.2" fill="none" stroke="#c89a86" stroke-width="0.5"/></g><circle cx="12" cy="12" r="11.7" fill="none" stroke="rgba(0,0,0,0.06)" stroke-width="0.6"/></svg><div class="w a" style="left:762.3px;top:915px;font-size:12.75px;line-height:15px;color:#333">Big fish in shallow water are easy pickings for one</div><svg class="w" style="left:1190px;top:916px" width="16" height="14"><path d="M4.6 2.6L1.3 7L4.6 11.4M11.6 2.6L14.9 7L11.6 11.4" fill="none" stroke="#1a9bff" stroke-width="2"/><path d="M9.4 0.4L6.7 13.6" stroke="#1a9bff" stroke-width="1.8"/></svg><svg class="w" style="left:1231px;top:90px" width="24" height="24" viewBox="0 0 24 24"><defs><clipPath id="chdr"><circle cx="12" cy="12" r="12"/></clipPath></defs><g clip-path="url(#chdr)"><defs><linearGradient id="ghdr" x1="0" y1="0" x2="0" y2="1"><stop offset="0" stop-color="#efe9e2"/><stop offset="0.38" stop-color="#e2dcd2"/><stop offset="0.46" stop-color="#8fae55"/><stop offset="0.8" stop-color="#6f9440"/></linearGradient></defs><rect width="24" height="24" fill="url(#ghdr)"/><rect x="3" y="1" width="2" height="8" fill="#c4b4a4" opacity="0.7"/><rect x="17" y="2" width="2.5" height="7" fill="#d2c6b8" opacity="0.7"/><path d="M1.5 24Q3 17.2 12 16.8Q21 17.2 22.5 24Z" fill="#ebe7e6"/><path d="M5.3 16.6Q4.8 6.2 7.8 4.2Q11.6 2.1 15.3 4.2Q18.4 6.2 17.9 16.6Q15.6 17 15 14.6L8.3 14.6Q7.8 17 5.3 16.6Z" fill="#3d271b"/><ellipse cx="11.6" cy="10.9" rx="3.6" ry="4.6" fill="#e6c0a8"/><path d="M7.9 8.2Q9.3 5.2 11.7 5.3Q14.6 5.3 15.4 8.4Q13.6 6.8 11.7 6.8Q9.4 6.8 7.9 8.2Z" fill="#3d271b"/><path d="M10.2 14.2Q11.6 15 13 14.2" fill="none" stroke="#c89a86" stroke-width="0.5"/></g><circle cx="12" cy="12" r="11.7" fill="none" stroke="rgba(0,0,0,0.06)" stroke-width="0.6"/></svg>
</div>
<div class="co" style="left:1047px;top:18px;width:169px;height:32px"><div class="t" style="top:7.0px;left:0;right:0;text-align:center">Start Label Stream</div></div><div class="co" style="left:220px;top:195px;width:68px;height:32px"><div class="t" style="top:7.0px;left:0;right:0;text-align:center">Tabs</div></div><div class="co" style="left:65px;top:239px;width:223px;height:32px"><div class="t" style="top:7.0px;left:0;right:0;text-align:center">Actions for selected tasks</div></div><div class="co" style="left:101px;top:406px;width:187px;height:46px"><div class="t" style="top:8px">Task (Row)</div><div class="s" style="top:26px;line-height:14px">Click to open in Quick View</div></div><div class="co" style="left:95px;top:762px;width:193px;height:32px"><div class="t" style="top:7.0px;left:0;right:0;text-align:center">Task Completion Date</div></div><div class="co" style="left:85px;top:832px;width:203px;height:32px"><div class="t" style="top:7.0px;left:0;right:0;text-align:center">Number of Annotations</div></div><div class="co" style="left:23px;top:901px;width:265px;height:32px"><div class="t" style="top:7.0px;left:0;right:0;text-align:center">Number of Skipped Annotations</div></div><div class="co" style="left:91px;top:972px;width:197px;height:32px"><div class="t" style="top:7.0px;left:0;right:0;text-align:center">Number of Predictions</div></div><div class="co" style="left:750px;top:1037px;width:305px;height:32px"><div class="t" style="top:7.0px;left:0;right:0;text-align:center">Annotators of Submitted Annotations</div></div><div class="co" style="left:1632px;top:195px;width:168px;height:32px"><div class="t" style="top:7.0px;left:0;right:0;text-align:center">Task List Counters</div></div><div class="co" style="left:1632px;top:278px;width:120px;height:46px"><div class="t" style="top:8px">Data Type</div><div class="s" style="top:26px;line-height:14px">Click to change</div></div><div class="co" style="left:1632px;top:336px;width:166px;height:46px"><div class="t" style="top:8px">Show Task Source</div><div class="s" style="top:26px;line-height:14px">Click to display</div></div><div class="co" style="left:1632px;top:525px;width:165px;height:32px"><div class="t" style="top:7.0px;left:0;right:0;text-align:center">Task Data Column</div></div><svg style="position:absolute;left:0;top:0" width="1920" height="1080"><path d="M289 211H319M296 204L289 211L296 218M312 204L319 211L312 218M288 255H336M329 248L336 255L329 262M288 429H319M312 422L319 429L312 436M288 778H522M515 771L522 778L515 785M288 848H706M699 841L706 848L699 855M288 917.5H771M764 910.5L771 917.5L764 924.5M288 988H835M828 981L835 988L828 995M902.5 1037V1008M894 1008H911M1077 55V257Q1077 260.5 1073.5 260.5H1043M1050 253.5L1043 260.5L1050 267.5M1632 211H1575M1582 204L1575 211L1582 218M1632 301H1487M1494 294L1487 301L1494 308M1632 358H1528M1535 351L1528 358L1535 365M1632 540.5H1288Q1284.5 540.5 1284.5 537V507M1277.5 514L1284.5 507L1291.5 514" fill="none" stroke="#ff9500" stroke-width="2" stroke-linecap="round" stroke-linejoin="round"/></svg>
</div></body></html>
